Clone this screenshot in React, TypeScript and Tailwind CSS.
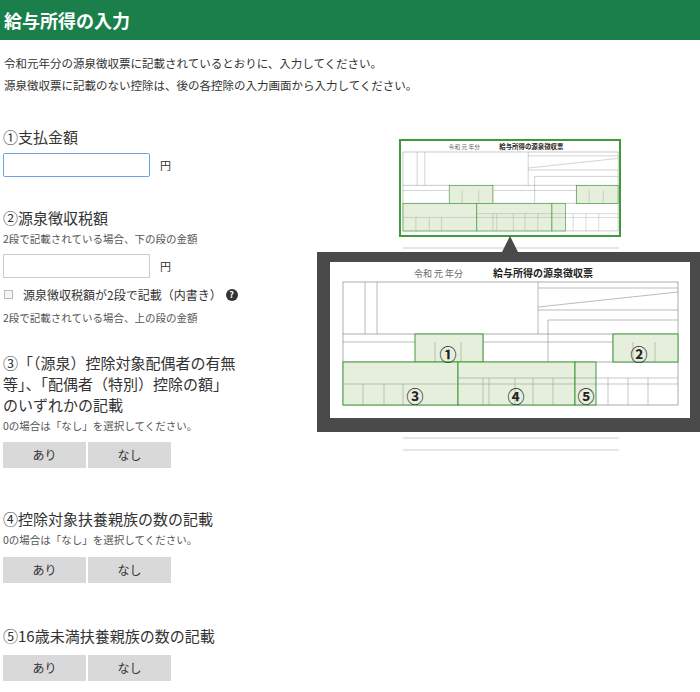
import React from 'react';

const font = { fontFamily: '"Noto Sans CJK JP", "Noto Sans", sans-serif' };

// withholding slip drawing, table origin at 0,0, 335 x 123
function Slip({ nums }: { nums: boolean }) {
  const g = '#e6eedc';
  const gs = '#3f9a3a';
  const ln = '#777';
  return (
    <g fontFamily='"Noto Sans CJK JP", sans-serif'>
      <text x="120" y="-5" fontSize="9" fill="#666" textAnchor="end">令和 元 年分</text>
      <text x="150" y="-5" fontSize="10" fontWeight="bold" fill="#222">給与所得の源泉徴収票</text>
      <rect x="0" y="0" width="335" height="123" fill="#fff" stroke={ln} strokeWidth="0.6" />
      {/* top block */}
      <line x1="22" y1="0" x2="22" y2="52" stroke={ln} strokeWidth="0.5" />
      <line x1="34" y1="0" x2="34" y2="52" stroke={ln} strokeWidth="0.5" />
      <line x1="195" y1="0" x2="195" y2="52" stroke={ln} strokeWidth="0.5" />
      <line x1="195" y1="6" x2="335" y2="6" stroke={ln} strokeWidth="0.5" />
      <line x1="195" y1="25" x2="335" y2="10" stroke={ln} strokeWidth="0.5" />
      <line x1="195" y1="28" x2="335" y2="28" stroke={ln} strokeWidth="0.5" />
      <line x1="205" y1="38" x2="335" y2="38" stroke={ln} strokeWidth="0.5" />
      <line x1="205" y1="38" x2="205" y2="52" stroke={ln} strokeWidth="0.5" />
      <line x1="0" y1="52" x2="335" y2="52" stroke={ln} strokeWidth="0.6" />
      <line x1="0" y1="60" x2="335" y2="60" stroke={ln} strokeWidth="0.5" />
      <line x1="0" y1="80" x2="335" y2="80" stroke={ln} strokeWidth="0.6" />
      {[140, 205, 270].map(x => <line key={x} x1={x} y1="52" x2={x} y2="80" stroke={ln} strokeWidth="0.5" />)}
      {/* green cells row 1 */}
      <rect x="72" y="52" width="68" height="28" fill={g} stroke={gs} strokeWidth="1" />
      <rect x="270" y="52" width="65" height="28" fill={g} stroke={gs} strokeWidth="1" />
      <line x1="92" y1="60" x2="92" y2="80" stroke={ln} strokeWidth="0.4" />
      <line x1="118" y1="60" x2="118" y2="80" stroke={ln} strokeWidth="0.4" />
      <line x1="290" y1="60" x2="290" y2="80" stroke={ln} strokeWidth="0.4" />
      <line x1="312" y1="60" x2="312" y2="80" stroke={ln} strokeWidth="0.4" />
      {/* row 2 */}
      <rect x="0" y="80" width="115" height="43" fill={g} stroke={gs} strokeWidth="1" />
      <rect x="115" y="80" width="117" height="43" fill={g} stroke={gs} strokeWidth="1" />
      <rect x="232" y="80" width="21" height="43" fill={g} stroke={gs} strokeWidth="1" />
      {[20, 41, 60, 140, 146, 172, 190, 210, 265, 285, 305].map(x => (
        <line key={x} x1={x} y1={x < 115 ? 102 : 96} x2={x} y2="123" stroke={ln} strokeWidth="0.4" />
      ))}
      <line x1="0" y1="102" x2="335" y2="102" stroke={ln} strokeWidth="0.4" />
      <line x1="115" y1="96" x2="335" y2="96" stroke={ln} strokeWidth="0.4" />
      {nums && (
        <g fontSize="17" fontWeight="bold" fill="#222" textAnchor="middle">
          <text x="105" y="79">①</text>
          <text x="296" y="79">②</text>
          <text x="72" y="121">③</text>
          <text x="173" y="121">④</text>
          <text x="243" y="121">⑤</text>
        </g>
      )}
    </g>
  );
}

function Illustration() {
  return (
    <svg width="383" height="315" viewBox="0 0 383 315">
      {/* small slip */}
      <rect x="83" y="2" width="220" height="310" fill="#fff" />
      <g transform="translate(86 14) scale(0.642)">
        <Slip nums={false} />
      </g>
      {[98, 110, 122, 300, 312].map(y => <line key={y} x1="86" y1={y} x2="302" y2={y} stroke="#999" strokeWidth="0.5" />)}
      <rect x="83" y="2" width="220" height="96" fill="none" stroke="#3f9a3a" strokeWidth="2" />
      <polygon points="193,98 185,114 201,114" fill="#4a4a4a" />
      {/* panel */}
      <rect x="0" y="114" width="383" height="180" fill="#4a4a4a" />
      <rect x="13" y="124" width="360" height="156" fill="#fff" />
      <g transform="translate(26 144)">
        <Slip nums />
      </g>
    </svg>
  );
}

function YenInput() {
  return (
    <div className="flex items-center gap-[10px]">
      <div className="w-[147px] h-[24px] border border-[#ccc] bg-white" />
      <span className="text-[11px] text-[#333]">円</span>
    </div>
  );
}

function YesNo() {
  return (
    <div className="flex gap-[2px] mt-[9px]">
      <div className="w-[83px] h-[26px] bg-[#d9d9d9] flex items-center justify-center text-[12px] text-[#333]">あり</div>
      <div className="w-[83px] h-[26px] bg-[#d9d9d9] flex items-center justify-center text-[12px] text-[#333]">なし</div>
    </div>
  );
}

export default function App() {
  return (
    <div className="w-[700px] h-[692px] bg-white overflow-hidden text-[#333]" style={font}>
      <div className="h-[40px] bg-[#1a7f4b] flex items-center px-[4px]">
        <h1 className="text-white text-[18px] font-bold">給与所得の入力</h1>
      </div>
      <div className="px-[4px] pt-[12px] text-[11.5px] leading-[22px]">
        <p>令和元年分の源泉徴収票に記載されているとおりに、入力してください。</p>
        <p>源泉徴収票に記載のない控除は、後の各控除の入力画面から入力してください。</p>
      </div>
      <div className="flex">
        <div className="w-[313px] pl-[3px] pt-[31px]">
          <div className="text-[15px] leading-[20px]">①支払金額</div>
          <div className="mt-[6px] flex items-center gap-[10px]">
            <div className="w-[147px] h-[24px] border border-[#6aa7e0] rounded-[2px] bg-white" />
            <span className="text-[11px]">円</span>
          </div>
          <div className="text-[15px] leading-[20px] mt-[31px]">②源泉徴収税額</div>
          <div className="text-[10.5px] text-[#555] mt-[3px]">2段で記載されている場合、下の段の金額</div>
          <div className="mt-[7px]"><YenInput /></div>
          <div className="flex items-center mt-[8px] text-[12px]">
            <div className="w-[9px] h-[9px] border border-[#bbb] bg-[#f4f4f4] mr-[10px] ml-[1px]" />
            <span>源泉徴収税額が2段で記載（内書き）</span>
            <span className="ml-[4px] w-[12px] h-[12px] rounded-full bg-[#333] text-white text-[9px] font-bold flex items-center justify-center">?</span>
          </div>
          <div className="text-[10.5px] text-[#555] mt-[6px]">2段で記載されている場合、上の段の金額</div>
          <div className="text-[15px] leading-[21px] mt-[26px] whitespace-nowrap">
            ③「（源泉）控除対象配偶者の有無<br />等」、「配偶者（特別）控除の額」<br />のいずれかの記載
          </div>
          <div className="text-[10.5px] text-[#555] mt-[3px]">0の場合は「なし」を選択してください。</div>
          <YesNo />
          <div className="text-[15px] leading-[20px] mt-[41px]">④控除対象扶養親族の数の記載</div>
          <div className="text-[10.5px] text-[#555] mt-[3px]">0の場合は「なし」を選択してください。</div>
          <YesNo />
          <div className="text-[15px] leading-[20px] mt-[43px]">⑤16歳未満扶養親族の数の記載</div>
          <div className="mt-[0px]"><YesNo /></div>
        </div>
        <div className="pt-[42px] pl-[4px]">
          <Illustration />
        </div>
      </div>
    </div>
  );
}
